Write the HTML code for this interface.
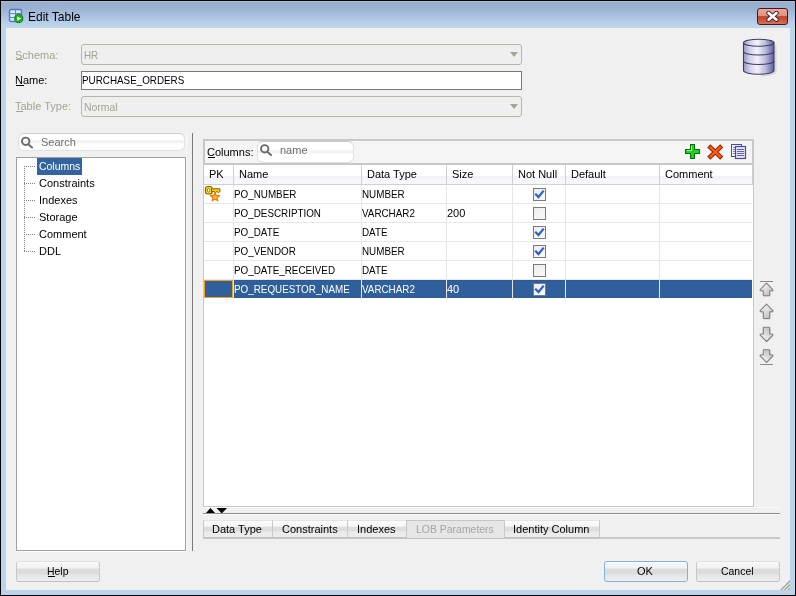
<!DOCTYPE html>
<html><head><meta charset="utf-8">
<style>
*{box-sizing:border-box}
html,body{margin:0;padding:0;width:796px;height:596px;overflow:hidden;background:#000}
body{font-family:"Liberation Sans",sans-serif;font-size:11px;color:#000;position:relative}
.a{position:absolute}
.t{position:absolute;white-space:nowrap;line-height:13px;will-change:transform}
.u{display:inline-block;transform:scaleX(.895);transform-origin:0 0}
.l{display:inline-block;transform:scaleX(.95);transform-origin:0 0}
#frame{left:1px;top:1px;width:794px;height:594px;background:#bcd4ea}
#title{left:1px;top:1px;width:794px;height:27px;background:linear-gradient(#a8bed9 0,#a8bed9 1px,#99b0cf 1px,#99b0cf 5px,#9eb4d2 9px,#a7bfdc 14px,#b2cae6 19px,#b9d1ea 23px,#bcd5e8 25px,#bdd7e6 27px)}
#content{left:6px;top:28px;width:784px;height:562px;background:#f0f0f0}
.dis{color:#a3a590}
.combo{border:1px solid #b4b8a4;border-radius:3px;background:#efefef}
.tri{width:0;height:0;border-left:4.5px solid transparent;border-right:4.5px solid transparent;border-top:5px solid #a4a892}
.btn{border:1px solid #c8c8c8;border-top-color:#dedede;border-bottom-color:#c0c0c0;border-radius:3px;background:linear-gradient(#fdfdfd 0,#f5f5f5 10%,#f2f2f2 32%,#e6e6e6 35%,#dcdcdc 38%,#dcdcdc 62%,#e5e5e5 66%,#ebebeb 90%,#f2f2f2 100%)}
.tab{border:1px solid #c8c8c8;border-top-color:#e4e4e4;border-bottom:2px solid #c4c4c4;background:linear-gradient(#fbfbfb 0,#f6f6f6 33%,#dddddd 37%,#dddddd 63%,#ebebeb 67%,#ebebeb 100%)}
.vl{width:1px;background:#e6e6e6}
.hl{height:1px;background:#e8e8e8}
.cb{width:13px;height:13px;border:1px solid #7b7b7b;background:linear-gradient(135deg,#ececec,#fafafa)}
</style></head><body>
<div class="a" id="frame"></div>
<div class="a" id="title"></div>
<div class="a" id="content"></div>

<!-- title -->
<div class="t" style="left:28px;top:10px;font-size:12px;line-height:14px">Edit Table</div>

<!-- close button -->
<div class="a" style="left:757px;top:8px;width:31px;height:17px;border:1px solid #4b1520;border-radius:3px;background:linear-gradient(#eaa898 0,#e29080 45%,#c44a30 50%,#c8502f 70%,#d8735c 100%)"></div>

<!-- form labels -->
<div class="t dis" style="left:15px;top:49px">Schema:</div>
<div class="a" style="left:16px;top:59px;width:7px;height:1px;background:#a3a590"></div>
<div class="t" style="left:15px;top:74px">Name:</div>
<div class="a" style="left:16px;top:85px;width:8px;height:1px;background:#000"></div>
<div class="t dis" style="left:15px;top:100px">Table Type:</div>
<div class="a" style="left:16px;top:111px;width:7px;height:1px;background:#a3a590"></div>

<div class="a combo" style="left:81px;top:44px;width:441px;height:21px"></div>
<div class="t dis" style="left:84px;top:49px"><span class="u">HR</span></div>
<div class="a tri" style="left:510px;top:52px"></div>

<div class="a" style="left:81px;top:71px;width:441px;height:19px;background:#fff;border:1px solid #7a7a7a"></div>
<div class="t" style="left:82px;top:74px"><span class="u">PURCHASE_ORDERS</span></div>

<div class="a combo" style="left:81px;top:96px;width:441px;height:21px"></div>
<div class="t dis" style="left:84px;top:101px"><span class="l">Normal</span></div>
<div class="a tri" style="left:510px;top:104px"></div>

<!-- left panel -->
<div class="a" style="left:18px;top:133px;width:167px;height:18px;border:1px solid #e2e2e2;border-top-color:#cfcfcf;border-radius:6px;background:linear-gradient(#fff 0,#fff 37%,#f3f3f3 40%,#f3f3f3 56%,#fff 60%,#fff 100%)"></div>
<div class="t" style="left:41px;top:136px;color:#6e6e6e">Search</div>
<div class="a" style="left:16px;top:133px;width:171px;height:419px;border-right:1px solid #fafafa;border-bottom:1px solid #fafafa"></div>
<div class="a" style="left:16px;top:157px;width:170px;height:394px;background:#fff;border:1px solid #a0a0a0"></div>
<div class="a" style="left:37px;top:158px;width:45px;height:17px;background:#3464a0"></div>
<div class="t" style="left:39px;top:160px;color:#fff"><span class="l">Columns</span></div>
<div class="t" style="left:39px;top:177px">Constraints</div>
<div class="t" style="left:39px;top:194px">Indexes</div>
<div class="t" style="left:39px;top:211px">Storage</div>
<div class="t" style="left:39px;top:228px">Comment</div>
<div class="t" style="left:39px;top:245px">DDL</div>

<!-- splitter -->
<div class="a" style="left:192px;top:133px;width:1px;height:418px;background:#7a7a7a"></div>

<!-- table panel -->
<div class="a" style="left:203px;top:139px;width:551px;height:368px;border:1px solid #c8c8c8;background:#fff"></div>
<div class="a" style="left:204px;top:140px;width:549px;height:25px;border:1px solid #c8c8c8;border-bottom:2px solid #c6c6c6;background:#f5f5f5"></div>
<div class="t" style="left:207px;top:146px">Columns:</div>
<div class="a" style="left:208px;top:157px;width:7px;height:1px;background:#000"></div>
<div class="a" style="left:257px;top:141px;width:97px;height:22px;border:1px solid #e0e0e0;border-top-color:#c8c8c8;border-radius:6px;background:linear-gradient(#fff 0,#fff 40%,#f3f3f3 43%,#f3f3f3 55%,#fff 58%,#fff 100%)"></div>
<div class="t" style="left:280px;top:144px;color:#6e6e6e">name</div>

<!-- header -->
<div class="a" style="left:204px;top:165px;width:549px;height:19px;background:linear-gradient(#fff 0,#fff 56%,#f1f2fa 60%,#f2f3fa 71%,#f6f7fa 75%,#f6f7fa 100%)"></div>
<div class="a" style="left:204px;top:184px;width:549px;height:1px;background:#d0d0d0"></div>
<div class="a" style="left:752px;top:165px;width:1px;height:19px;background:#d0d0d0"></div>

<div class="t" style="left:209px;top:168px">PK</div>
<div class="t" style="left:239px;top:168px">Name</div>
<div class="t" style="left:367px;top:168px">Data Type</div>
<div class="t" style="left:452px;top:168px">Size</div>
<div class="t" style="left:518px;top:168px">Not Null</div>
<div class="t" style="left:571px;top:168px">Default</div>
<div class="t" style="left:665px;top:168px">Comment</div>

<!-- rows -->
<div class="a hl" style="left:204px;top:203px;width:548px"></div>
<div class="a hl" style="left:204px;top:222px;width:548px"></div>
<div class="a hl" style="left:204px;top:241px;width:548px"></div>
<div class="a hl" style="left:204px;top:260px;width:548px"></div>
<div class="a hl" style="left:204px;top:279px;width:548px"></div>
<div class="a" style="left:204px;top:280px;width:548px;height:18px;background:#30609c;border-top:1px solid #2c5a94;border-bottom:1px solid #2c5a94"></div>
<div class="a" style="left:233px;top:165px;width:1px;height:19px;background:#d0d0d0"></div>
<div class="a vl" style="left:233px;top:185px;height:113px"></div>
<div class="a" style="left:361px;top:165px;width:1px;height:19px;background:#d0d0d0"></div>
<div class="a vl" style="left:361px;top:185px;height:113px"></div>
<div class="a" style="left:446px;top:165px;width:1px;height:19px;background:#d0d0d0"></div>
<div class="a vl" style="left:446px;top:185px;height:113px"></div>
<div class="a" style="left:512px;top:165px;width:1px;height:19px;background:#d0d0d0"></div>
<div class="a vl" style="left:512px;top:185px;height:113px"></div>
<div class="a" style="left:565px;top:165px;width:1px;height:19px;background:#d0d0d0"></div>
<div class="a vl" style="left:565px;top:185px;height:113px"></div>
<div class="a" style="left:659px;top:165px;width:1px;height:19px;background:#d0d0d0"></div>
<div class="a vl" style="left:659px;top:185px;height:113px"></div>
<div class="a" style="left:204px;top:280px;width:29px;height:18px;border:1px solid #f0a020"></div>
<div class="t" style="left:234px;top:188px;"><span class="u">PO_NUMBER</span></div>
<div class="t" style="left:362px;top:188px;"><span class="u">NUMBER</span></div>
<div class="a cb" style="left:533px;top:188px"></div>
<svg class="a" style="left:533px;top:188px" width="13" height="13" viewBox="0 0 13 13"><path d="M3 6.5 L5.5 9 L10 3.5" stroke="#2b5fd0" stroke-width="2.2" fill="none" stroke-linecap="square"/></svg>
<div class="t" style="left:234px;top:207px;"><span class="u">PO_DESCRIPTION</span></div>
<div class="t" style="left:362px;top:207px;"><span class="u">VARCHAR2</span></div>
<div class="t" style="left:447px;top:207px;">200</div>
<div class="a cb" style="left:533px;top:207px"></div>
<div class="t" style="left:234px;top:226px;"><span class="u">PO_DATE</span></div>
<div class="t" style="left:362px;top:226px;"><span class="u">DATE</span></div>
<div class="a cb" style="left:533px;top:226px"></div>
<svg class="a" style="left:533px;top:226px" width="13" height="13" viewBox="0 0 13 13"><path d="M3 6.5 L5.5 9 L10 3.5" stroke="#2b5fd0" stroke-width="2.2" fill="none" stroke-linecap="square"/></svg>
<div class="t" style="left:234px;top:245px;"><span class="u">PO_VENDOR</span></div>
<div class="t" style="left:362px;top:245px;"><span class="u">NUMBER</span></div>
<div class="a cb" style="left:533px;top:245px"></div>
<svg class="a" style="left:533px;top:245px" width="13" height="13" viewBox="0 0 13 13"><path d="M3 6.5 L5.5 9 L10 3.5" stroke="#2b5fd0" stroke-width="2.2" fill="none" stroke-linecap="square"/></svg>
<div class="t" style="left:234px;top:264px;"><span class="u">PO_DATE_RECEIVED</span></div>
<div class="t" style="left:362px;top:264px;"><span class="u">DATE</span></div>
<div class="a cb" style="left:533px;top:264px"></div>
<div class="t" style="left:234px;top:283px; color:#fff;"><span class="u">PO_REQUESTOR_NAME</span></div>
<div class="t" style="left:362px;top:283px; color:#fff;"><span class="u">VARCHAR2</span></div>
<div class="t" style="left:447px;top:283px; color:#fff;">40</div>
<div class="a cb" style="left:533px;top:283px"></div>
<svg class="a" style="left:533px;top:283px" width="13" height="13" viewBox="0 0 13 13"><path d="M3 6.5 L5.5 9 L10 3.5" stroke="#2b5fd0" stroke-width="2.2" fill="none" stroke-linecap="square"/></svg>



<!-- below table -->
<div class="a" style="left:203px;top:507px;width:577px;height:1px;background:#fafafa"></div>
<svg class="a" style="left:205px;top:507px" width="24" height="7" viewBox="0 0 24 7">
<path d="M1 6 L5.5 1 L10 6 Z" fill="#000"/>
<path d="M11.5 1 L22 1 L16.75 6.5 Z" fill="#000"/>
</svg>
<div class="a" style="left:203px;top:513px;width:577px;height:1px;background:#8c8c8c"></div>
<div class="a" style="left:203px;top:514px;width:577px;height:1px;background:#fbfbfb"></div>
<div class="a" style="left:203px;top:537px;width:577px;height:2px;background:#c8c8c8"></div>
<div class="a tab" style="left:203px;top:520px;width:70px;height:19px"></div>
<div class="a tab" style="left:272px;top:520px;width:76px;height:19px"></div>
<div class="a tab" style="left:347px;top:520px;width:60px;height:19px"></div>
<div class="a" style="left:406px;top:520px;width:99px;height:19px;border:1px solid #c4c4c4;background:#e6e6e6"></div>
<div class="a tab" style="left:504px;top:520px;width:96px;height:19px"></div>
<div class="t" style="left:212px;top:523px">Data Type</div>
<div class="t" style="left:282px;top:523px">Constraints</div>
<div class="t" style="left:357px;top:523px">Indexes</div>
<div class="t" style="left:416px;top:523px;color:#a4a4a4"><span class="l">LOB Parameters</span></div>
<div class="t" style="left:513px;top:523px">Identity Column</div>

<!-- move arrows -->
<svg class="a" style="left:758px;top:279px" width="18" height="88" viewBox="0 0 18 88">
<defs><linearGradient id="ag" x1="0" x2=".6" y1="0" y2="1"><stop offset="0" stop-color="#ffffff"/><stop offset="1" stop-color="#c2c2c2"/></linearGradient>
</defs>
<path d="M2 2.5 H15" stroke="#8a8a8a" stroke-width="1"/>
<g fill="#000" opacity=".13" transform="translate(.8,.9)"><path d="M8.5 0 L14.8 6.4 Q15.1 7.5 14 7.5 H11.7 V12 Q11.7 12.5 11.2 12.5 H5.8 Q5.3 12.5 5.3 12 V7.5 H3 Q1.9 7.5 2.2 6.4 Z" transform="translate(0,4.2)"/><path d="M8.5 0 L14.8 6.4 Q15.1 7.5 14 7.5 H11.7 V13.8 Q11.7 14.3 11.2 14.3 H5.8 Q5.3 14.3 5.3 13.8 V7.5 H3 Q1.9 7.5 2.2 6.4 Z" transform="translate(0,25.2)"/><path d="M8.5 0 L14.8 6.4 Q15.1 7.5 14 7.5 H11.7 V13.8 Q11.7 14.3 11.2 14.3 H5.8 Q5.3 14.3 5.3 13.8 V7.5 H3 Q1.9 7.5 2.2 6.4 Z" transform="translate(0,62.5) scale(1,-1)"/><path d="M8.5 0 L14.8 6.4 Q15.1 7.5 14 7.5 H11.7 V12 Q11.7 12.5 11.2 12.5 H5.8 Q5.3 12.5 5.3 12 V7.5 H3 Q1.9 7.5 2.2 6.4 Z" transform="translate(0,83.3) scale(1,-1)"/></g>
<g fill="url(#ag)" stroke="#80808a" stroke-width="1.1" stroke-linejoin="round"><path d="M8.5 0 L14.8 6.4 Q15.1 7.5 14 7.5 H11.7 V12 Q11.7 12.5 11.2 12.5 H5.8 Q5.3 12.5 5.3 12 V7.5 H3 Q1.9 7.5 2.2 6.4 Z" transform="translate(0,4.2)"/><path d="M8.5 0 L14.8 6.4 Q15.1 7.5 14 7.5 H11.7 V13.8 Q11.7 14.3 11.2 14.3 H5.8 Q5.3 14.3 5.3 13.8 V7.5 H3 Q1.9 7.5 2.2 6.4 Z" transform="translate(0,25.2)"/></g>
<g fill="url(#ag)" stroke="#80808a" stroke-width="1.1" stroke-linejoin="round"><path d="M8.5 0 L14.8 6.4 Q15.1 7.5 14 7.5 H11.7 V13.8 Q11.7 14.3 11.2 14.3 H5.8 Q5.3 14.3 5.3 13.8 V7.5 H3 Q1.9 7.5 2.2 6.4 Z" transform="translate(0,62.5) scale(1,-1)"/><path d="M8.5 0 L14.8 6.4 Q15.1 7.5 14 7.5 H11.7 V12 Q11.7 12.5 11.2 12.5 H5.8 Q5.3 12.5 5.3 12 V7.5 H3 Q1.9 7.5 2.2 6.4 Z" transform="translate(0,83.3) scale(1,-1)"/></g>
<path d="M2 85.5 H15" stroke="#8a8a8a" stroke-width="1"/>
</svg>

<!-- tree lines -->
<div class="a" style="left:24px;top:166px;width:1px;height:86px;background:repeating-linear-gradient(#808080 0,#808080 1px,transparent 1px,transparent 2px)"></div>
<div class="a" style="left:24px;top:166px;width:12px;height:1px;background:repeating-linear-gradient(90deg,#808080 0,#808080 1px,transparent 1px,transparent 2px)"></div>
<div class="a" style="left:24px;top:183px;width:12px;height:1px;background:repeating-linear-gradient(90deg,#808080 0,#808080 1px,transparent 1px,transparent 2px)"></div>
<div class="a" style="left:24px;top:200px;width:12px;height:1px;background:repeating-linear-gradient(90deg,#808080 0,#808080 1px,transparent 1px,transparent 2px)"></div>
<div class="a" style="left:24px;top:217px;width:12px;height:1px;background:repeating-linear-gradient(90deg,#808080 0,#808080 1px,transparent 1px,transparent 2px)"></div>
<div class="a" style="left:24px;top:234px;width:12px;height:1px;background:repeating-linear-gradient(90deg,#808080 0,#808080 1px,transparent 1px,transparent 2px)"></div>
<div class="a" style="left:24px;top:251px;width:12px;height:1px;background:repeating-linear-gradient(90deg,#808080 0,#808080 1px,transparent 1px,transparent 2px)"></div>

<!-- resize grip -->
<svg class="a" style="left:778px;top:578px" width="12" height="12" viewBox="0 0 12 12">
<path d="M12.5 2.5 L2.5 12.5 M12.5 6 L6 12.5 M12.5 9.5 L9.5 12.5" stroke="#a0a088" stroke-width="1.3"/>
</svg>

<!-- bottom buttons -->
<div class="a btn" style="left:16px;top:561px;width:84px;height:21px"></div>
<div class="t" style="left:47px;top:565px"><span class="l">Help</span></div>
<div class="a" style="left:48px;top:576px;width:7px;height:1px;background:#000"></div>
<div class="a btn" style="left:604px;top:561px;width:84px;height:21px;border-color:#7fb0df"></div>
<div class="t" style="left:637px;top:565px">OK</div>
<div class="a btn" style="left:696px;top:561px;width:84px;height:21px"></div>
<div class="t" style="left:721px;top:565px"><span class="l">Cancel</span></div>


<!-- title icon -->
<svg class="a" style="left:8px;top:8px" width="17" height="17" viewBox="0 0 17 17">
<rect x="1.5" y="1.5" width="12" height="12" rx="1.5" fill="#dbe6f6" stroke="#4a7bd4" stroke-width="1.4"/>
<path d="M2 5.5H13 M2 9.5H13 M7.5 2V13" stroke="#5a8ad8" stroke-width="1"/>
<circle cx="10.75" cy="10.5" r="4.1" fill="#1eb01e" stroke="#0a800a" stroke-width="1"/>
<path d="M9.3 8.5 L13.2 10.6 L9.3 12.7 Z" fill="#fff"/>
</svg>
<!-- close X -->
<svg class="a" style="left:766px;top:11px" width="13" height="11" viewBox="0 0 13 11">
<path d="M2.5 2 L10.5 8.8 M10.5 2 L2.5 8.8" stroke="#383040" stroke-width="4.4" stroke-linecap="round"/>
<path d="M2.5 2 L10.5 8.8 M10.5 2 L2.5 8.8" stroke="#fff" stroke-width="2.5" stroke-linecap="round"/>
</svg>
<!-- DB icon -->
<svg class="a" style="left:741px;top:37px" width="38" height="42" viewBox="0 0 38 42">
<defs><linearGradient id="dbg" x1="0" x2="1" y1="0" y2="0">
<stop offset="0" stop-color="#9898c6"/><stop offset=".2" stop-color="#cfcfea"/><stop offset=".45" stop-color="#f6f0fa"/><stop offset=".72" stop-color="#babadc"/><stop offset="1" stop-color="#5c5ca0"/></linearGradient></defs>
<path d="M34.5 8 V34 A16 4 0 0 1 20 38.5" stroke="#000" stroke-opacity=".1" stroke-width="2" fill="none"/>
<path d="M2.5 6 V33.5 A15.25 3.8 0 0 0 33 33.5 V6 Z" fill="url(#dbg)" stroke="#3c3c62" stroke-width="1.1"/>
<ellipse cx="17.75" cy="5.8" rx="15.25" ry="3.5" fill="url(#dbg)" stroke="#3c3c62" stroke-width="1.1"/>
<path d="M2.5 14.5 A15.25 3.5 0 0 0 33 14.5 M2.5 24 A15.25 3.5 0 0 0 33 24" fill="none" stroke="#3c3c62" stroke-width="1.1"/>
</svg>
<!-- search magnifier left -->
<svg class="a" style="left:20px;top:136px" width="14" height="13" viewBox="0 0 14 13">
<circle cx="5.7" cy="5.3" r="3.7" fill="none" stroke="#6a6a6a" stroke-width="1.9"/>
<path d="M8.5 8.5 L12 11.5" stroke="#707070" stroke-width="2.2" stroke-linecap="round"/>
</svg>
<!-- search magnifier toolbar -->
<svg class="a" style="left:259px;top:143px" width="14" height="14" viewBox="0 0 14 13">
<circle cx="5.7" cy="5.3" r="3.7" fill="none" stroke="#6a6a6a" stroke-width="1.9"/>
<path d="M8.5 8.5 L12 11.5" stroke="#707070" stroke-width="2.2" stroke-linecap="round"/>
</svg>
<!-- green plus -->
<svg class="a" style="left:685px;top:144px" width="16" height="16" viewBox="0 0 16 16">
<path d="M5.5 0.5 H9.5 V5.5 H14.5 V9.5 H9.5 V14.5 H5.5 V9.5 H0.5 V5.5 H5.5 Z" fill="#1ed21e" stroke="#0c6c0c" stroke-width="1.1" stroke-linejoin="round"/>
<path d="M6.5 2 V6.5 H2" stroke="#a8f4a8" stroke-width="1" fill="none"/>
</svg>
<!-- red X -->
<svg class="a" style="left:707px;top:144px" width="17" height="16" viewBox="0 0 17 16">
<path d="M1.8 1.8 L14.7 14.2 M14.7 1.8 L1.8 14.2" stroke="#9a1e00" stroke-width="4.4" stroke-linecap="butt"/>
<path d="M2.6 2.6 L13.9 13.4 M13.9 2.6 L2.6 13.4" stroke="#ff5a14" stroke-width="2.3" stroke-linecap="butt"/>
</svg>
<!-- copy icon -->
<svg class="a" style="left:730px;top:143px" width="18" height="18" viewBox="0 0 18 18">
<rect x="1.5" y="1.5" width="10" height="12" fill="#f0f0fc" stroke="#4c4c9c" stroke-width="1"/>
<path d="M3 4.5H9M3 6.5H9M3 8.5H9M3 10.5H9" stroke="#8080c0" stroke-width="1"/>
<rect x="5.5" y="3.5" width="10" height="12" fill="#e4e4f6" stroke="#4c4c9c" stroke-width="1.2"/>
<path d="M7 6.5H14M7 8.5H14M7 10.5H14M7 12.5H14" stroke="#6464b0" stroke-width="1"/>
</svg>
<!-- key icon -->
<svg class="a" style="left:204px;top:185px" width="18" height="17" viewBox="0 0 18 17">
<rect x="1.5" y="1.5" width="6.5" height="7.5" rx="2" fill="#ffe020" stroke="#8a5a00" stroke-width="1.2"/>
<ellipse cx="4.5" cy="5.2" rx="1.2" ry="1.8" fill="#fff" stroke="#8a5a00" stroke-width=".8"/>
<path d="M7.5 3.8 H16 V6.5 L14.5 7.5 L13 6.5 L11.5 7.5 L10 6.5 H7.5 Z" fill="#ffd000" stroke="#8a5a00" stroke-width="1"/>
<path d="M11 7.5 L12.3 10.5 L15.5 10.7 L13 12.7 L13.9 15.8 L11 14 L8.1 15.8 L9 12.7 L6.5 10.7 L9.7 10.5 Z" fill="#ffc020" stroke="#ee7a10" stroke-width="1.2" stroke-linejoin="round"/>
</svg>

</body></html>
